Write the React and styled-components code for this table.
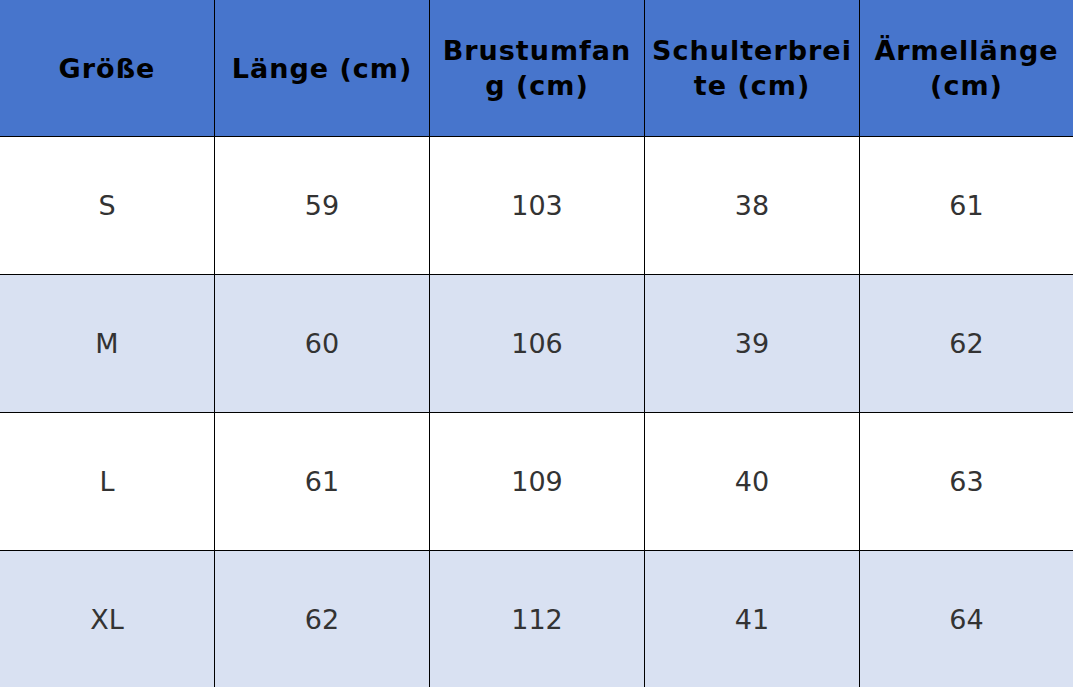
import React from 'react';
import styled, { createGlobalStyle } from 'styled-components';

const GlobalStyle = createGlobalStyle`
    html, body {
        margin: 0;
        padding: 0;
        background: #ffffff;
        overflow: hidden;
    }
`;

const Table = styled.div`
    display: grid;
    grid-template-columns: repeat(4, 215px) 1fr;
    grid-template-rows: 136px repeat(4, 138px);
    width: 1073px;
    font-family: "DejaVu Sans", Verdana, sans-serif;
`;

const HeadCell = styled.div`
    display: flex;
    align-items: center;
    justify-content: center;
    text-align: center;
    padding: 0 6px;
    background: #4775cc;
    color: #000000;
    font-weight: bold;
    font-size: 27px;
    letter-spacing: 1px;
    line-height: 35px;
    word-break: break-all;
    border-right: ${(p) => (p.last ? 'none' : '1px solid #000')};
`;

const Cell = styled.div`
    display: flex;
    align-items: center;
    justify-content: center;
    background: ${(p) => (p.shaded ? '#d9e1f2' : '#ffffff')};
    color: #333333;
    font-size: 27px;
    border-top: 1px solid #000;
    border-right: ${(p) => (p.last ? 'none' : '1px solid #000')};
`;

const headers = ['Größe', 'Länge (cm)', 'Brustumfang (cm)', 'Schulterbreite (cm)', 'Ärmellänge (cm)'];

const rows = [
    ['S', '59', '103', '38', '61'],
    ['M', '60', '106', '39', '62'],
    ['L', '61', '109', '40', '63'],
    ['XL', '62', '112', '41', '64'],
];

const App = () => (
    <>
        <GlobalStyle />
        <Table>
            {headers.map((h, i) => (
                <HeadCell key={h} last={i === headers.length - 1}>
                    {h}
                </HeadCell>
            ))}
            {rows.map((row, r) =>
                row.map((v, c) => (
                    <Cell key={`${r}-${c}`} shaded={r % 2 === 1} last={c === row.length - 1}>
                        {v}
                    </Cell>
                ))
            )}
        </Table>
    </>
);

export default App;
